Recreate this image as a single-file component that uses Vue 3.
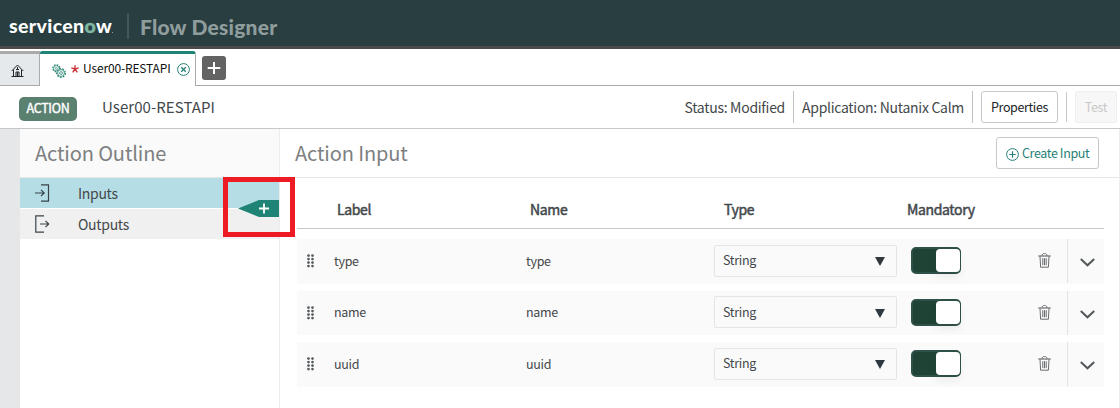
<script setup>
import { ref } from 'vue'

const rows = ref([
  { name: 'type', type: 'String', on: true },
  { name: 'name', type: 'String', on: true },
  { name: 'uuid', type: 'String', on: true },
])
</script>

<template>
  <div class="page">
    <header class="banner">
      <div class="logo">servicen<span>o</span>w<i></i></div>
      <div class="product">Flow Designer</div>
    </header>

    <nav class="tabs">
      <div class="tab home">
        <svg width="13" height="13" viewBox="0 0 13 13" fill="none" stroke="#20282b" stroke-width="1">
          <path d="M.7 7 6.5 1l5.8 6M2.5 5.8v6.7h8V5.8M.5 12.5h12M5 12.5V8h3v4.500M6.500 3v3M5 5.500h3M6.500 8v4" />
        </svg>
      </div>
      <div class="tab active">
        <svg class="gears" width="14" height="14" viewBox="0 0 14 14" fill="none" stroke="#278571">
          <circle cx="4.300" cy="4.300" r="3.500" stroke-width="1.300" stroke-dasharray="1.500 1.250" />
          <circle cx="4.300" cy="4.300" r="2.700" stroke-width=".7" />
          <circle cx="4.300" cy="4.300" r="1" stroke-width=".6" />
          <circle cx="9" cy="9" r="4.300" fill="#fff" stroke-width="1.300" stroke-dasharray="1.700 1.300" />
          <circle cx="9" cy="9" r="3.400" stroke-width=".8" />
          <circle cx="9" cy="9" r="1.400" stroke-width=".8" />
        </svg>
        <svg class="star" width="8" height="8" viewBox="0 0 8 8" stroke="#c8363b" stroke-width="1.400">
          <path d="M4 4V.2M4 4 .3 2.900M4 4l3.700-1.100M4 4 1.700 7.400M4 4l2.300 3.400" />
        </svg>
        <span class="tab-name">User00-RESTAPI</span>
        <svg class="close" width="13" height="13" viewBox="0 0 13 13" fill="none" stroke="#267f78">
          <circle cx="6.500" cy="6.500" r="5.900" />
          <path d="m4.200 4.200 4.600 4.600m0-4.600L4.200 8.800" stroke-width="1.300" />
        </svg>
      </div>
      <div class="rest">
        <button class="add">
          <svg width="14" height="14" viewBox="0 0 14 14" stroke="#fff" stroke-width="2"><path d="M7 1v12M.7 7h12.600" /></svg>
        </button>
      </div>
    </nav>

    <div class="toolbar">
      <span class="badge">ACTION</span>
      <span class="title">User00-RESTAPI</span>
      <span class="status">Status: Modified</span>
      <span class="application">Application: Nutanix Calm</span>
      <button class="btn properties">Properties</button>
      <span class="sep"></span>
      <button class="btn test">Test</button>
    </div>

    <div class="body">
      <div class="gutter"></div>
      <aside class="outline">
        <h2>Action Outline</h2>
        <div class="item inputs">
          <svg width="16" height="18" viewBox="0 0 16 18" fill="none" stroke="#394249" stroke-width="1.200">
            <path d="M6 .8h7.500v16.400H6M0 9h9M6 5.800 9.200 9 6 12.200" />
          </svg>
          <span>Inputs</span>
        </div>
        <div class="item outputs">
          <svg width="16" height="18" viewBox="0 0 16 18" fill="none" stroke="#394249" stroke-width="1.200">
            <path d="M9 .8H.8v16.400H9M5 9h9M10.500 5.800 13.700 9l-3.200 3.200" />
          </svg>
          <span>Outputs</span>
        </div>
        <svg class="insert" width="41" height="17" viewBox="0 0 41 17">
          <path d="M0 8.500 21 0h20v17H21z" fill="#1f8476" />
          <path d="M26 3.500v10M21 8.500h10" stroke="#fff" stroke-width="1.800" />
        </svg>
        <div class="highlight"></div>
      </aside>

      <main class="content">
        <div class="content-head">
          <h2>Action Input</h2>
          <button class="btn create">
            <svg width="13" height="13" viewBox="0 0 13 13" fill="none" stroke="#267f78">
              <circle cx="6.500" cy="6.500" r="5.900" /><path d="M6.500 3.300v6.400M3.300 6.500h6.400" stroke-width="1.200" />
            </svg>
            <span>Create Input</span>
          </button>
        </div>
        <div class="grid columns">
          <span></span><b>Label</b><b>Name</b><b>Type</b><b>Mandatory</b>
        </div>
        <div class="rows">
          <div v-for="row in rows" :key="row.name" class="grid row">
            <svg class="grip" width="7" height="14" viewBox="0 0 7 14" fill="#555b5f">
              <g v-for="n in 4" :key="n">
                <circle cx="1.500" :cy="n * 3.500 - 1.900" r="1.350" />
                <circle cx="5.500" :cy="n * 3.500 - 1.900" r="1.350" />
              </g>
            </svg>
            <span class="text">{{ row.name }}</span>
            <span class="text">{{ row.name }}</span>
            <div class="select">
              <span>{{ row.type }}</span>
              <svg width="10" height="9" viewBox="0 0 10 9"><path d="M0 0h10L5 9z" fill="#30383f" /></svg>
            </div>
            <div class="toggle" :class="{ on: row.on }"><i></i></div>
            <svg class="trash" width="13" height="15" viewBox="0 0 13 15" fill="none" stroke="#696b6e">
              <path d="M.3 3h12.400" stroke-width="1.200" /><path d="M4 2.700c0-3 5-3 5 0M2 3.300l.6 10.900h7.800L11 3.300M4.800 5.200v7M6.500 5.200v7M8.200 5.200v7" />
            </svg>
            <div class="expand">
              <svg width="15" height="9" viewBox="0 0 15 9" fill="none" stroke="#53585b" stroke-width="2"><path d="m.8 1 6.700 6.300L14.200 1" /></svg>
            </div>
          </div>
        </div>
      </main>
    </div>
  </div>
</template>

<style>
body { margin: 0; overflow: hidden; }
</style>

<style scoped>
* { box-sizing: border-box; }
.page {
  width: 1120px; height: 408px; background: #fff; color: #43484b; overflow: hidden;
  font-family: "Noto Sans CJK SC", "Noto Sans", sans-serif; font-size: 14px; line-height: 20px;
  display: flex; flex-direction: column;
}
span, b, h2 { white-space: nowrap; }
button { font: inherit; margin: 0; padding: 0; }
svg { display: block; flex: none; }
.banner { height: 49px; flex: none; background: #293e40; border-bottom: 3px solid #4b4b4b; display: flex; }
.logo {
  width: 129px; height: 26px; margin-top: 13px; padding-left: 9px; border-right: 2px solid #455658;
  color: #fff; font: 900 19.500px/25px Lato, sans-serif; letter-spacing: .35px; display: flex; align-items: baseline;
}
.logo span { color: #80b6a1; -webkit-text-stroke: .4px; }
.logo i { width: 1px; height: 1px; background: #9aa5a6; }
.product { margin: 13px 0 0 11px; color: #909d9d; font: 900 21px/27px Lato, sans-serif; letter-spacing: .2px; white-space: nowrap; }

.tabs { height: 37px; flex: none; padding-top: 2px; display: flex; }
.tab { display: flex; height: 35px; }
.home { width: 40px; background: #e6e9eb; border-top: 3px solid #aaa; border-right: 1px solid #aaa; border-bottom: 1px solid #aaa; padding: 10px 0 0 11px; }
.active { width: 156px; border-top: 3px solid #1f8476; border-right: 1px solid #aaa; border-radius: 2px 3px 0 0; color: #111; }
.gears { margin: 10px 0 0 12px; }
.star { margin: 11px 0 0 5px; }
.tab-name { width: 94px; margin: 4px 0 0 4px; font-size: 12px; letter-spacing: -.15px; }
.close { margin-top: 9px; }
.rest { flex: 1; border-bottom: 1px solid #aaa; padding: 5px 0 0 6px; }
.add { width: 24px; height: 24px; border: 0; border-radius: 3px; background: #636363; display: grid; place-items: center; }

.toolbar { height: 43px; flex: none; border-bottom: 1px solid #c5c7c8; display: flex; padding-top: 5px; }
.badge { width: 58px; height: 24px; margin: 6px 0 0 19px; border-radius: 5px; background: #5a8070; color: #fff; font-size: 12.500px; line-height: 22px; text-align: center; letter-spacing: -.3px; -webkit-text-stroke: .4px; }
.title { margin: 6px 0 0 25px; font-size: 15px; letter-spacing: .07px; }
.status { margin-left: auto; }
.status, .application { height: 32px; line-height: 32px; padding-right: 8px; border-right: 1px solid #c0c2c3; letter-spacing: -.29px; }
.application { padding-left: 8px; }
.btn { height: 32px; border: 1px solid #c6c8c9; border-radius: 3px; background: #fff; font-size: 12.500px; line-height: 27px; padding-bottom: 1px; letter-spacing: -.38px; color: #20262a; }
.properties { width: 77px; margin-left: 8px; }
.sep { width: 1px; height: 30px; margin: 1px 8px 0; background: #c6c8c9; }
.test { width: 42px; margin-right: 3px; background: #f7f7f7; border-color: #eee; color: #c8c8c8; }

.body { flex: 1; display: flex; min-height: 0; }
.gutter { width: 20px; background: #e6e7e9; }
.outline { width: 260px; position: relative; border-right: 1px solid #ededed; }
h2 { margin: 0; font-weight: 400; font-size: 20px; line-height: 48px; letter-spacing: -.12px; color: #7d7f81; }
.outline h2 { height: 49px; padding-left: 15px; background: #fafafa; border-bottom: 1px solid #e6e6e6; }
.item { height: 30px; display: flex; align-items: center; padding-left: 15px; gap: 27px; letter-spacing: -.3px; }
.inputs { background: #b5dde5; }
.outputs { margin-top: 1px; background: #f0f0f0; }
.insert { position: absolute; left: 218px; top: 71px; }
.highlight { position: absolute; left: 203px; top: 48px; width: 72px; height: 60px; border: 5px solid #ed1c24; z-index: 1; }
.content { flex: 1; border-right: 1px solid #ededed; }
.content-head { height: 49px; border-bottom: 1px solid #e6e6e6; display: flex; justify-content: space-between; padding: 0 20px 0 15px; }
.create { width: 103px; margin-top: 8px; color: #267f78; display: flex; padding-left: 9px; gap: 3px; }
.create svg { margin-top: 10px; }
.create span { margin-top: 1px; }
.grid { display: grid; grid-template-columns: 37px 192px 188px 197px 127px 29px 37px; width: 807px; margin-left: 17px; }
.columns { height: 51px; padding-top: 21px; border-bottom: 1px solid #c5c7c8; letter-spacing: -.36px; }
.columns b { font-weight: 400; -webkit-text-stroke: .5px; }
.columns b:nth-child(2) { padding-left: 3px; }
.columns b:nth-child(3) { padding-left: 4px; }
.columns b:nth-child(4) { padding-left: 10px; }
.columns b:nth-child(5) { margin-left: -4px; }
.rows { padding-top: 10px; display: grid; gap: 7px; }
.row { height: 44.500px; background: #fafafa; align-items: center; font-size: 12.500px; letter-spacing: -.3px; }
.text { margin-top: -1px; }
.grip { margin-left: 10px; }
.select { width: 183px; height: 32px; margin-top: -1px; border: 1px solid #e3e5e6; border-radius: 2px; display: flex; justify-content: space-between; align-items: center; padding: 0 11px 0 8px; }
.select span { margin-top: -1px; }
.select svg { margin-top: 2px; }
.toggle { width: 50px; height: 27px; margin-top: -1px; border: 2px solid #30514a; border-right-width: 1px; border-radius: 5px; background: #1f4435; display: flex; }
.toggle.on { justify-content: flex-end; }
.toggle i { width: 24px; height: 23px; border-radius: 4px; background: #fff; box-shadow: 0 5px 9px #0001; }
.trash { margin-top: -1px; }
.expand { height: 44px; border-left: 1px solid #e0e2e3; display: grid; place-items: center; padding: 3px 0 0 2px; }
</style>
